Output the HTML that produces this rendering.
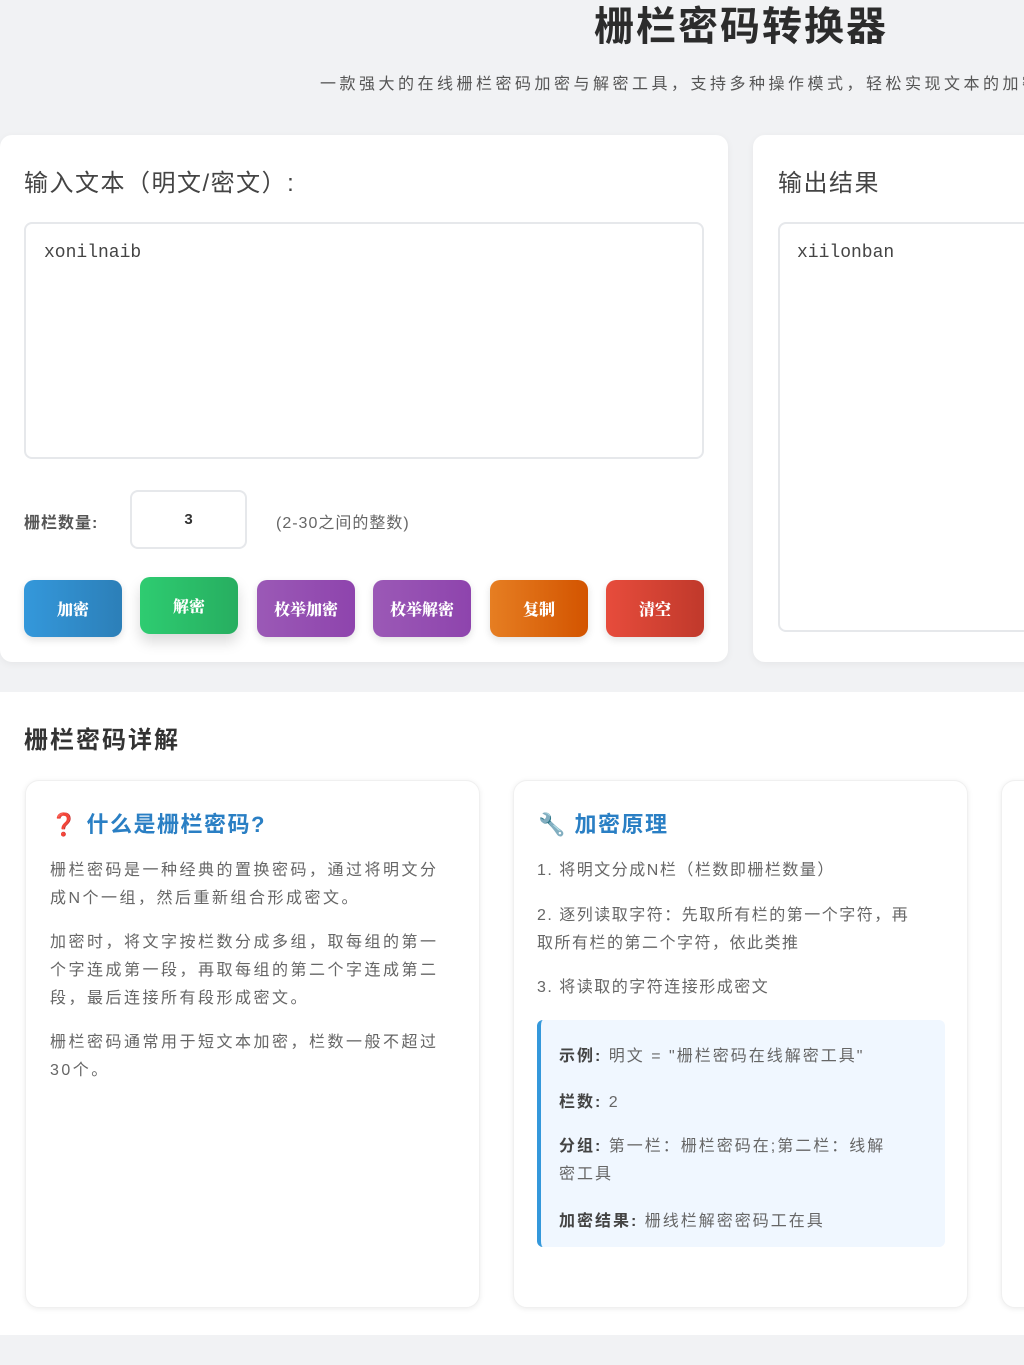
<!DOCTYPE html>
<html><head><meta charset="utf-8"><style>
*{box-sizing:border-box;margin:0;padding:0}
body{width:1024px;height:1365px;overflow:hidden;background:#f1f2f4;font-family:"Liberation Sans","Noto Sans CJK SC",sans-serif;color:#333;position:relative}
.a{position:absolute;white-space:nowrap}
h1{position:absolute;left:594px;top:-6px;font-size:40px;font-weight:700;color:#2c2c2c;white-space:nowrap;letter-spacing:2px}
.sub{left:320px;top:70px;font-size:16px;color:#555;letter-spacing:3.5px}
.card{background:#fff;border-radius:12px;box-shadow:0 2px 8px rgba(0,0,0,.05)}
.lbl{font-size:24px;color:#444;letter-spacing:1.5px}
.box{border:2px solid #e6e8eb;border-radius:8px;background:#fff}
.mono{font-family:"Liberation Mono","DejaVu Sans Mono",monospace;font-size:18px;color:#444}
.btn{top:580px;width:98px;height:57px;border-radius:10px;color:#fff;font-family:"Noto Serif CJK SC",serif;font-weight:900;font-size:16px;display:flex;align-items:center;justify-content:center;box-shadow:0 3px 8px rgba(0,0,0,.12)}
.ic{background:#fff;border-radius:14px;box-shadow:0 1px 6px rgba(0,0,0,.08);border:1px solid #f0f0f0}
.ih{font-size:22px;font-weight:700;color:#2a7fc4;letter-spacing:1.5px}
.p{font-size:16px;color:#666;line-height:28px;letter-spacing:2.5px}
.ex{font-size:16px;color:#666;letter-spacing:2px}
.ex b{color:#444}
</style></head><body>
<h1>栅栏密码转换器</h1>
<div class="a sub">一款强大的在线栅栏密码加密与解密工具，支持多种操作模式，轻松实现文本的加密和解密</div>

<div class="a card" style="left:0;top:135px;width:728px;height:527px"></div>
<div class="a lbl" style="left:24px;top:163px">输入文本（明文/密文）:</div>
<div class="a box" style="left:24px;top:222px;width:680px;height:237px"></div>
<div class="a mono" style="left:44px;top:243px">xonilnaib</div>
<div class="a" style="left:24px;top:509px;font-size:16px;font-weight:700;color:#555;letter-spacing:1px">栅栏数量:</div>
<div class="a box" style="left:130px;top:490px;width:117px;height:59px;display:flex;align-items:center;justify-content:center;font-size:15px;font-weight:700;color:#333">3</div>
<div class="a" style="left:276px;top:509px;font-size:16px;color:#666;letter-spacing:1px">(2-30之间的整数)</div>
<div class="a btn" style="left:24px;background:linear-gradient(90deg,#3498db,#2c7fb8)">加密</div>
<div class="a btn" style="left:140px;top:577px;background:linear-gradient(90deg,#2ecc71,#27ae60);box-shadow:0 8px 14px rgba(0,0,0,.15)">解密</div>
<div class="a btn" style="left:257px;background:linear-gradient(90deg,#9b59b6,#8e44ad)">枚举加密</div>
<div class="a btn" style="left:373px;background:linear-gradient(90deg,#9b59b6,#8e44ad)">枚举解密</div>
<div class="a btn" style="left:490px;background:linear-gradient(90deg,#e67e22,#d35400)">复制</div>
<div class="a btn" style="left:606px;background:linear-gradient(90deg,#e74c3c,#c0392b)">清空</div>

<div class="a card" style="left:753px;top:135px;width:400px;height:527px"></div>
<div class="a lbl" style="left:778px;top:163px">输出结果</div>
<div class="a box" style="left:778px;top:222px;width:400px;height:410px"></div>
<div class="a mono" style="left:797px;top:243px">xiilonban</div>

<div class="a" style="left:0;top:692px;width:1024px;height:643px;background:#fff"></div>
<div class="a" style="left:24px;top:720px;font-size:24px;font-weight:700;color:#333;letter-spacing:2px">栅栏密码详解</div>

<div class="a ic" style="left:25px;top:780px;width:455px;height:528px"></div>
<div class="a ih" style="left:50px;top:807px"><span style="color:#e74c3c">❓</span> 什么是栅栏密码?</div>
<div class="a p" style="left:50px;top:857px">栅栏密码是一种经典的置换密码，通过将明文分<br>成N个一组，然后重新组合形成密文。</div>
<div class="a p" style="left:50px;top:929px">加密时，将文字按栏数分成多组，取每组的第一<br>个字连成第一段，再取每组的第二个字连成第二<br>段，最后连接所有段形成密文。</div>
<div class="a p" style="left:50px;top:1029px">栅栏密码通常用于短文本加密，栏数一般不超过<br>30个。</div>

<div class="a ic" style="left:513px;top:780px;width:455px;height:528px"></div>
<div class="a ih" style="left:538px;top:807px"><span style="color:#555">🔧</span> 加密原理</div>
<div class="a p" style="left:537px;top:857px;letter-spacing:1.5px">1. 将明文分成N栏（栏数即栅栏数量）</div>
<div class="a p" style="left:537px;top:902px;letter-spacing:1.5px">2. 逐列读取字符：先取所有栏的第一个字符，再<br>取所有栏的第二个字符，依此类推</div>
<div class="a p" style="left:537px;top:974px;letter-spacing:1.5px">3. 将读取的字符连接形成密文</div>
<div class="a" style="left:537px;top:1020px;width:408px;height:227px;background:#f0f7ff;border-left:4px solid #3498db;border-radius:6px"></div>
<div class="a ex" style="left:559px;top:1042px"><b>示例:</b> 明文 = "栅栏密码在线解密工具"</div>
<div class="a ex" style="left:559px;top:1088px"><b>栏数:</b> 2</div>
<div class="a ex" style="left:559px;top:1133px;line-height:28px"><b>分组:</b> 第一栏：栅栏密码在;第二栏：线解<br>密工具</div>
<div class="a ex" style="left:559px;top:1207px"><b>加密结果:</b> 栅线栏解密密码工在具</div>

<div class="a ic" style="left:1001px;top:780px;width:455px;height:528px"></div>
</body></html>
